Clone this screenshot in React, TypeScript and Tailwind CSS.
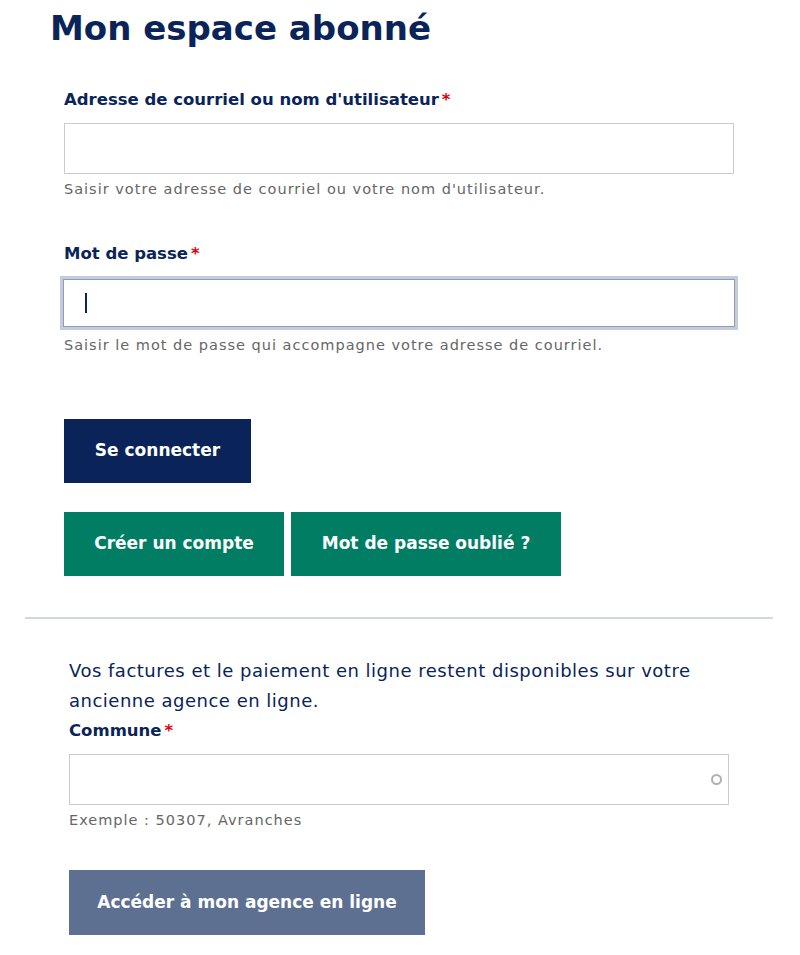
import React from 'react';

const heading = { fontFamily: '"DejaVu Sans", Verdana, sans-serif' };
const body = { fontFamily: '"DejaVu Sans", Verdana, sans-serif' };

const Label: React.FC<{ text: string; className?: string }> = ({ text, className = '' }) => (
  <label className={`block text-[16.5px] leading-[24px] font-bold text-[#0a2459] ${className}`} style={heading}>
    {text}
    <span className="ml-[3px] text-[#e1000f]">*</span>
  </label>
);

const Help: React.FC<{ text: string }> = ({ text }) => (
  <p className="mt-[5px] text-[14.5px] leading-[20px] tracking-[1px] text-[#666666]" style={body}>
    {text}
  </p>
);

const App: React.FC = () => {
  return (
    <div className="min-h-[955px] w-[800px] bg-white">
      <div className="pl-[50px] pt-[6px]">
        <h1 className="text-[34px] font-bold leading-[44px] text-[#0a2459]" style={heading}>
          Mon espace abonné
        </h1>
      </div>

      <div className="px-[64px] pt-[38px]">
        <Label text="Adresse de courriel ou nom d'utilisateur" />
        <input
          type="text"
          className="mt-[11px] block h-[51px] w-[670px] border border-[#cccccc] bg-white outline-none"
        />
        <Help text="Saisir votre adresse de courriel ou votre nom d'utilisateur." />

        <Label text="Mot de passe" className="mt-[43px]" />
        <div className="-ml-[4px] mt-[10px] w-[678px] border-[3px] border-[#c4ccd9] p-0">
          <div className="flex h-[48px] items-center border border-[#8d9cb8] bg-white pl-[21px]">
            <span className="block h-[20px] w-[2px] bg-[#0a2459]" />
          </div>
        </div>
        <Help text="Saisir le mot de passe qui accompagne votre adresse de courriel." />

        <div className="mt-[64px]" style={heading}>
          <button className="flex h-[64px] w-[187px] items-center justify-center bg-[#0a2459] text-[17px] font-bold text-white">
            Se connecter
          </button>
          <div className="mt-[29px] flex gap-[7px]">
            <button className="flex h-[64px] w-[220px] items-center justify-center bg-[#007d63] text-[17px] font-bold text-white">
              Créer un compte
            </button>
            <button className="flex h-[64px] w-[270px] items-center justify-center bg-[#007d63] text-[17px] font-bold text-white">
              Mot de passe oublié ?
            </button>
          </div>
        </div>
      </div>

      <div className="mx-[25px] mt-[41px] h-[2px] w-[748px] bg-[#d3d8de]" />

      <div className="px-[69px] pt-[37px]">
        <p className="text-[18px] leading-[30px] tracking-[0.5px] text-[#0a2459]" style={body}>
          Vos factures et le paiement en ligne restent disponibles sur votre
          <br />
          ancienne agence en ligne.
        </p>
        <Label text="Commune" className="mt-[3px]" />
        <div className="mt-[11px] flex h-[51px] w-[660px] items-center justify-end border border-[#cccccc] bg-white pr-[6px]">
          <span className="block h-[11px] w-[11px] rounded-full border-[2px] border-[#b0b0b0]" />
        </div>
        <Help text="Exemple : 50307, Avranches" />

        <button
          className="mt-[40px] flex h-[65px] w-[356px] items-center justify-center bg-[#5e7092] text-[17px] font-bold text-white"
          style={heading}
        >
          Accéder à mon agence en ligne
        </button>
      </div>
    </div>
  );
};

export default App;
